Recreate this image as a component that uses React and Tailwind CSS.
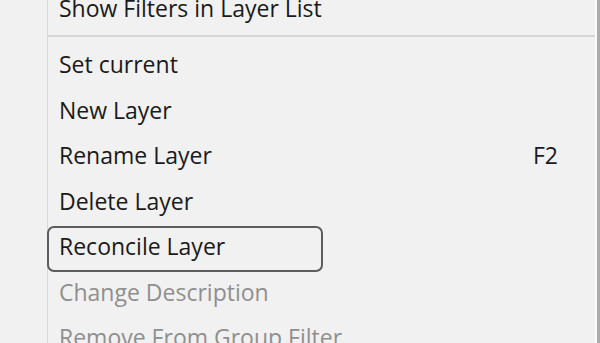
import React from 'react';

const items = [
  { label: 'Set current' },
  { label: 'New Layer' },
  { label: 'Rename Layer', shortcut: 'F2' },
  { label: 'Delete Layer' },
  { label: 'Reconcile Layer', focused: true },
  { label: 'Change Description', disabled: true },
  { label: 'Remove From Group Filter', disabled: true },
];

const MenuRow = ({ label, shortcut, focused, disabled }) => (
  <div className="relative flex h-[45.5px] items-center pl-[11px] pr-[37px]">
    {focused && (
      <span className="absolute left-[-1px] top-[2px] h-[46px] w-[276px] rounded-[7px] border-2 border-[#5c5c5c]" />
    )}
    <span className={disabled ? 'text-[#8f8f8f]' : 'text-[#1a1a1a]'}>{label}</span>
    {shortcut && <span className="ml-auto text-[#1a1a1a]">{shortcut}</span>}
  </div>
);

export default function App() {
  return (
    <div
      className="flex h-[343px] w-[600px] overflow-hidden bg-[#f1f1f1] text-[23px] font-medium"
      style={{ fontFamily: '"Open Sans", "Noto Sans", sans-serif' }}
    >
      {/* gutter */}
      <div className="w-[47px] shrink-0" />
      <div className="flex flex-1 border-l border-[#d9d9d9]">
        <div className="mt-[-15px] flex-1">
          <MenuRow label="Show Filters in Layer List" />
          <div className="flex h-[11px] items-center">
            <div className="h-[2px] w-full bg-[#d6d6d6]" />
          </div>
          {items.map(item => (
            <MenuRow key={item.label} {...item} />
          ))}
        </div>
        {/* window edge */}
        <div className="w-[2px] bg-[#fafafa]" />
        <div className="w-[3px] bg-[#acacac]" />
      </div>
    </div>
  );
}
